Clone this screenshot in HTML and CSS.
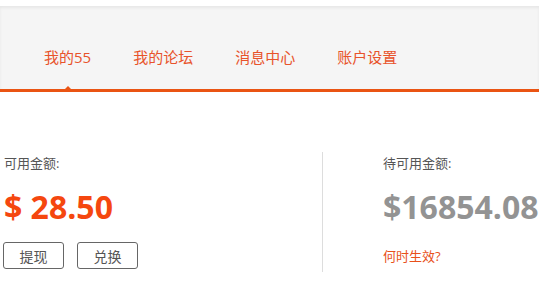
FILE: index.html
```html
<!DOCTYPE html>
<html lang="zh-CN">
<head>
<meta charset="UTF-8">
<meta name="viewport" content="width=device-width, initial-scale=1.0">
<title>我的55 - 账户余额</title>
<link rel="stylesheet" href="styles.css">
</head>
<body>

<!-- Top strip -->
<div class="top-strip"></div>

<!-- Tab nav -->
<div class="nav">
  <ul class="tabs">
    <li class="tab active">我的55</li>
    <li class="tab">我的论坛</li>
    <li class="tab">消息中心</li>
    <li class="tab">账户设置</li>
  </ul>
</div>

<!-- Balance -->
<div class="balance">
  <div class="col col-left">
    <div class="label">可用金额:</div>
    <div class="amount">$ 28.50</div>
    <div class="actions">
      <button class="btn">提现</button>
      <button class="btn">兑换</button>
    </div>
  </div>
  <div class="col col-right">
    <div class="label">待可用金额:</div>
    <div class="amount pending">$16854.08</div>
    <a class="link" href="#">何时生效?</a>
  </div>
</div>

</body>
</html>
```

FILE: styles.css
```css
/* Base */
body {
  margin: 0;
  padding: 0;
  background: #fff;
  font-family: 'Open Sans', 'Noto Sans CJK SC', sans-serif;
  overflow: hidden;
}
.top-strip {
  height: 6px;
  background: #fff;
}
/* Nav */
.nav {
  height: 86px;
  box-sizing: border-box;
  padding-top: 39px;
  background: #f5f5f5;
  box-shadow: inset 0 2px 3px rgba(0, 0, 0, 0.06);
  border-bottom: 3px solid #ea5413;
}
.tabs {
  display: flex;
  margin: 0;
  padding: 0 0 0 44px;
  list-style: none;
  gap: 42px;
}
.tab {
  position: relative;
  font-size: 15px;
  line-height: 24px;
  color: #e8532b;
  cursor: pointer;
}
.tab.active::after {
  content: "";
  position: absolute;
  top: calc(100% + 17px);
  left: 50%;
  margin-left: -6px;
  border-left: 6px solid transparent;
  border-right: 6px solid transparent;
  border-bottom: 6px solid #ea5413;
}
/* Balance */
.balance {
  display: flex;
  margin-top: 60px;
  padding-left: 4px;
}
.col {
  height: 120px;
  box-sizing: border-box;
  padding-top: 1px;
  white-space: nowrap;
}
.col-left {
  width: 318px;
}
.col-right {
  padding-left: 60px;
  border-left: 1px solid #ddd;
}
.label {
  font-size: 13px;
  line-height: 20px;
  color: #555;
}
.amount {
  margin-top: 14px;
  font-size: 32px;
  line-height: 40px;
  font-weight: 700;
  color: #f5470f;
}
.amount.pending {
  color: #939393;
}
.actions {
  display: flex;
  gap: 13px;
  margin-top: 15px;
  margin-left: -1px;
}
.btn {
  width: 61px;
  height: 27px;
  padding: 0;
  background: #fff;
  border: 1px solid #666;
  border-radius: 3px;
  font-family: 'Noto Sans CJK SC', sans-serif;
  font-size: 14px;
  color: #555;
  cursor: pointer;
}
.link {
  display: block;
  margin-top: 19px;
  font-size: 13px;
  line-height: 20px;
  color: #e8501a;
  text-decoration: none;
}
```
